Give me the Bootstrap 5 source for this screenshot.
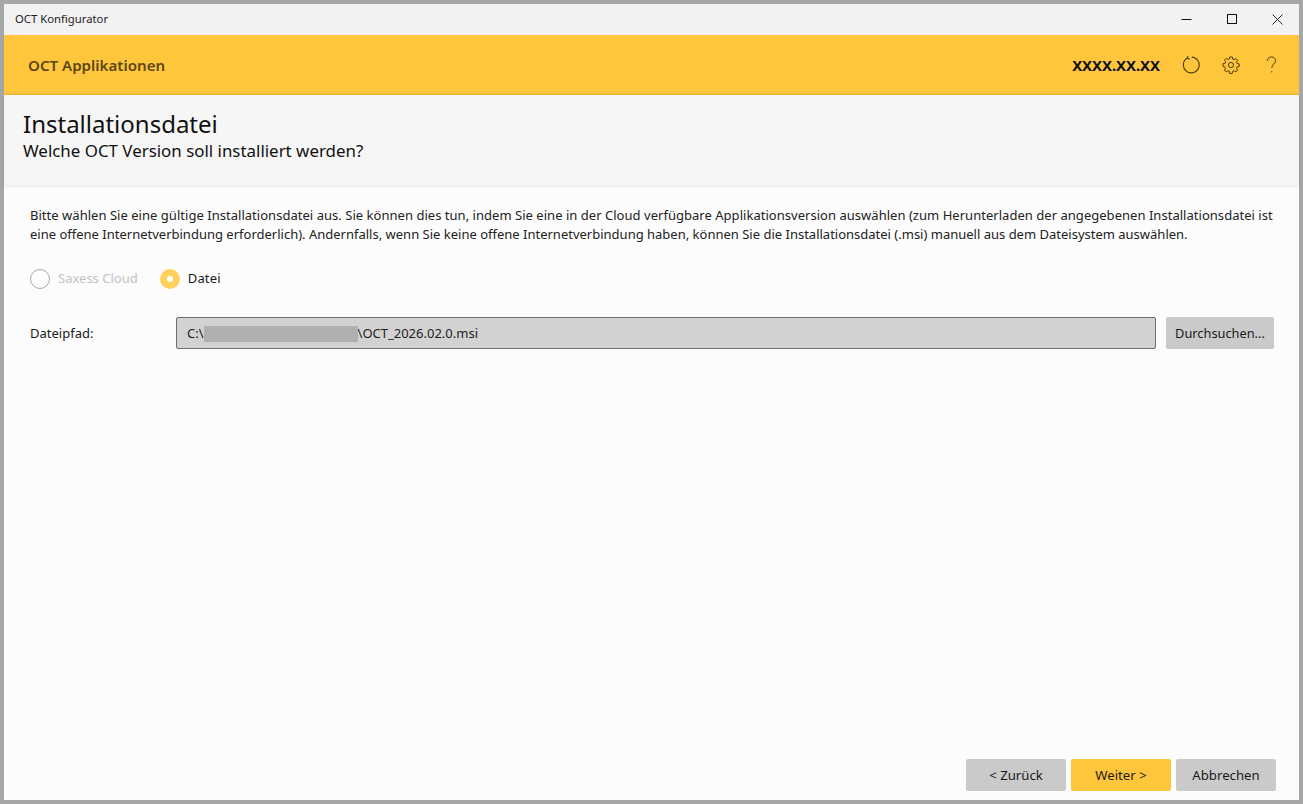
<!DOCTYPE html>
<html lang="de">
<head>
<meta charset="utf-8">
<title>OCT Konfigurator</title>
<link href="https://cdn.jsdelivr.net/npm/bootstrap@5.3.0/dist/css/bootstrap.min.css" rel="stylesheet">
<style>
html,body{height:100%;margin:0}
body{font-family:"Noto Sans",sans-serif;background:#a6a6a6;color:#1a1a1a;overflow:hidden}
.win-frame{height:804px;padding:4px;}
.win-inner{height:796px;background:#fcfcfc}
.title-strip{height:31px;background:#f2f2f2;font-size:11.3px;padding-left:11px;color:#222;flex:none}
.win-ctl{width:45px;height:31px}
.win-ctl:nth-child(2){padding-left:1px}
.win-ctl:last-child{padding-left:2px}
.app-strip{height:60px;background:#ffc63c;padding:0 8px 0 24px;box-shadow:inset 0 -2px 2px -1px rgba(160,110,0,.25);flex:none}
.app-name{font-size:15.1px;font-weight:600;color:#5c4714}
.app-ver{font-size:15px;font-weight:700;color:#111;margin-right:11px;letter-spacing:-.1px}
.tool-ico{width:40px;height:26px}
.head-strip{height:90px;background:#f6f6f6;padding:14px 19px 0;box-shadow:0 1px 3px rgba(0,0,0,.1);flex:none}
.head-title{font-size:24px;line-height:30px;color:#111;font-weight:400;margin:0}
.head-sub{font-size:16.9px;line-height:24px;color:#111;margin:0}
.body-area{padding:21px 25px 9px 26px}
.intro{font-size:13px;line-height:19px;color:#222;margin:0;white-space:nowrap}
.intro::first-line{letter-spacing:.03px}
.radio-row{margin-top:24px;height:22px;font-size:13px}
.rd{width:20px;height:20px;border-radius:50%;flex:none}
.rd-off{border:1.5px solid #a9a9a9;background:#fcfcfc}
.rd-on{background:#ffd15c;position:relative}
.rd-on::after{content:"";position:absolute;left:7px;top:7px;width:6px;height:6px;border-radius:50%;background:#fff}
.rd-lab-off{color:#c2c2c2;margin-left:8px;margin-right:22px}
.rd-lab-on{color:#1a1a1a;margin-left:8px;letter-spacing:.2px}
.path-row{margin-top:27px;height:32px;font-size:13px}
.path-lab{width:146px;flex:none;padding-top:1px}
.path-box{background:#d2d2d2;border:1px solid #6e6e6e;border-radius:2px;height:32px;padding:1px 0 0 10px;color:#222;font-size:13px}
.blur-bar{display:inline-block;width:154px;height:16px;background:#b0b0b0;filter:blur(.6px)}
.gbtn{background:#cacaca;border:0;border-radius:2px;color:#1a1a1a;font-size:12.8px;padding:1px 0 0;height:32px}
.gbtn-browse{width:108px;margin-left:10px;flex:none}
.gbtn-foot{width:100px;font-size:13.2px}
.ybtn{background:#ffc63c}
.foot-row{gap:5px;padding:0 23px 9px 0}
svg{display:block}
</style>
</head>
<body>
<div class="win-frame">
 <div class="win-inner d-flex flex-column">
  <div class="title-strip d-flex align-items-center justify-content-between">
   <span>OCT Konfigurator</span>
   <div class="d-flex">
    <div class="win-ctl d-flex align-items-center justify-content-center"><svg width="11" height="11" viewBox="0 0 11 11"><path d="M0.5 5.5h10" stroke="#111" fill="none"/></svg></div>
    <div class="win-ctl d-flex align-items-center justify-content-center"><svg width="11" height="11" viewBox="0 0 11 11"><rect x=".5" y=".5" width="9" height="9" stroke="#111" fill="none"/></svg></div>
    <div class="win-ctl d-flex align-items-center justify-content-center"><svg width="11" height="11" viewBox="0 0 11 11"><path d="M.5.5l10 10M10.5.5l-10 10" stroke="#111" fill="none" stroke-width=".9"/></svg></div>
   </div>
  </div>
  <div class="app-strip d-flex align-items-center justify-content-between">
   <span class="app-name">OCT Applikationen</span>
   <div class="d-flex align-items-center">
    <span class="app-ver">XXXX.XX.XX</span>
    <div class="tool-ico d-flex align-items-center justify-content-center"><svg width="18" height="18" viewBox="0 0 18 18" fill="none" stroke="#4a3a10" stroke-width="1.1"><path d="M5.4 2.1A7.9 7.9 0 1 0 9.8 1.1"/><path d="M5.9 .2L5.4 2.3L7.7 3.2"/></svg></div>
    <div class="tool-ico d-flex align-items-center justify-content-center"><svg width="18" height="18" viewBox="0 0 18 18" fill="none" stroke="#4a3a10" stroke-width="1"><circle cx="9" cy="9" r="2.6"/><path d="M7.7 1h2.6l.4 2.1 1.4.6 1.8-1.2 1.8 1.8-1.2 1.8.6 1.4 2.1.4v2.6l-2.1.4-.6 1.4 1.2 1.8-1.8 1.8-1.8-1.2-1.4.6-.4 2.1H7.7l-.4-2.1-1.4-.6-1.8 1.2-1.8-1.8 1.2-1.8-.6-1.4L1 10.3V7.7l2.1-.4.6-1.4-1.2-1.8 1.8-1.8 1.8 1.2 1.4-.6z"/></svg></div>
    <div class="tool-ico d-flex align-items-center justify-content-center"><svg width="11" height="18" viewBox="0 0 12 20" fill="none" stroke="#4a3a10" stroke-width="1.1"><path d="M1.5 5.5C1.5 3 3.4 1 6 1s4.5 2 4.5 4.3c0 3.4-4.2 3.8-4.2 8"/><circle cx="6.2" cy="17.6" r=".7" fill="#4a3a10" stroke="none"/></svg></div>
   </div>
  </div>
  <div class="head-strip">
   <h1 class="head-title">Installationsdatei</h1>
   <p class="head-sub">Welche OCT Version soll installiert werden?</p>
  </div>
  <div class="body-area flex-grow-1">
   <p class="intro">Bitte wählen Sie eine gültige Installationsdatei aus. Sie können dies tun, indem Sie eine in der Cloud verfügbare Applikationsversion auswählen (zum Herunterladen der angegebenen Installationsdatei ist<br>eine offene Internetverbindung erforderlich). Andernfalls, wenn Sie keine offene Internetverbindung haben, können Sie die Installationsdatei (.msi) manuell aus dem Dateisystem auswählen.</p>
   <div class="radio-row d-flex align-items-center">
    <span class="rd rd-off"></span><span class="rd-lab-off">Saxess Cloud</span>
    <span class="rd rd-on"></span><span class="rd-lab-on">Datei</span>
   </div>
   <div class="path-row d-flex align-items-center">
    <span class="path-lab">Dateipfad:</span>
    <div class="path-box flex-grow-1 d-flex align-items-center">C:\<span class="blur-bar"></span>\OCT_2026.02.0.msi</div>
    <button class="btn gbtn gbtn-browse" type="button">Durchsuchen...</button>
   </div>
  </div>
  <div class="foot-row d-flex justify-content-end">
   <button class="btn gbtn gbtn-foot" type="button">&lt; Zurück</button>
   <button class="btn gbtn gbtn-foot ybtn" type="button">Weiter &gt;</button>
   <button class="btn gbtn gbtn-foot" type="button">Abbrechen</button>
  </div>
 </div>
</div>
</body>
</html>
